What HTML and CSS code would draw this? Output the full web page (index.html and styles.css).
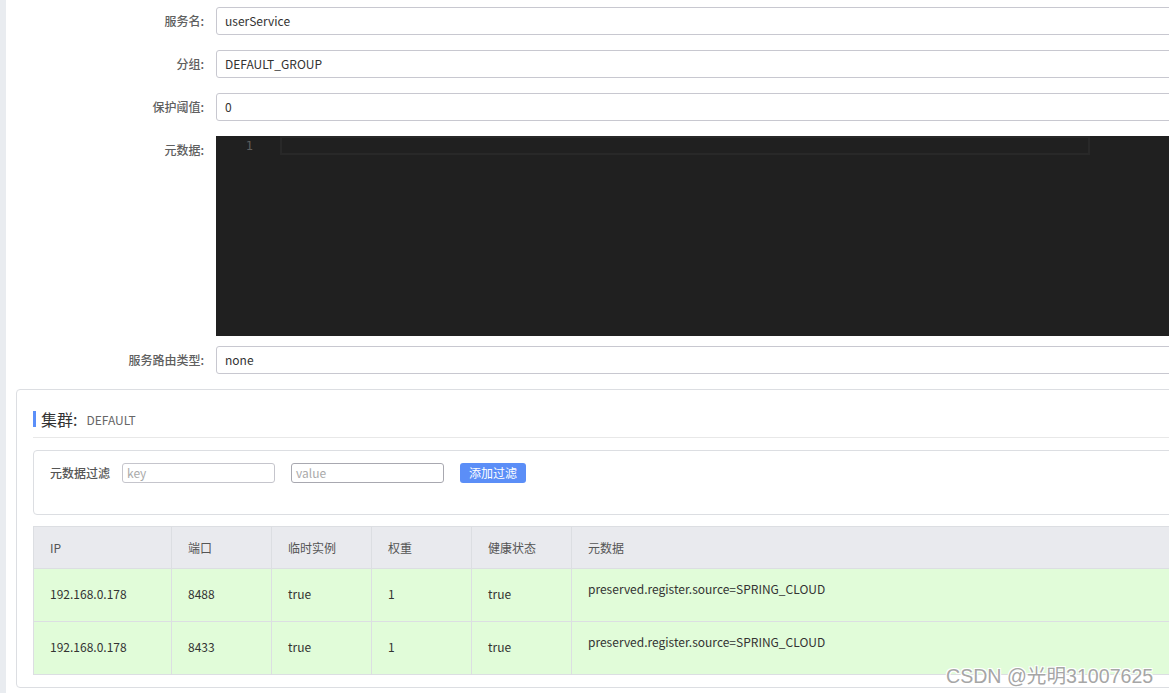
FILE: index.html
```html
<!DOCTYPE html>
<html lang="zh-CN">
<head>
<meta charset="utf-8">
<title>服务详情</title>
<link rel="stylesheet" href="styles.css">
</head>
<body>
<div class="page">
  <div class="sidebar"></div>
  <div class="main">
    <div class="form">
      <div class="row">
        <label class="label">服务名:</label>
        <div class="input">userService</div>
      </div>
      <div class="row">
        <label class="label">分组:</label>
        <div class="input">DEFAULT_GROUP</div>
      </div>
      <div class="row">
        <label class="label">保护阈值:</label>
        <div class="input">0</div>
      </div>
      <div class="row row-editor">
        <label class="label">元数据:</label>
        <div class="editor">
          <div class="gutter">1</div>
          <div class="lines"><div class="active-line"></div></div>
        </div>
      </div>
      <div class="row row-last">
        <label class="label">服务路由类型:</label>
        <div class="input">none</div>
      </div>
    </div>

    <div class="card">
      <div class="card-title"><span class="bar"></span><span class="title-main">集群:</span><span class="title-sub">DEFAULT</span></div>
      <div class="divider"></div>
      <div class="filter">
        <span class="filter-label">元数据过滤</span>
        <div class="small-input key">key</div>
        <div class="small-input value">value</div>
        <button class="btn">添加过滤</button>
      </div>
      <div class="table">
        <div class="tr th">
          <div class="c c1">IP</div>
          <div class="c c2">端口</div>
          <div class="c c3">临时实例</div>
          <div class="c c4">权重</div>
          <div class="c c5">健康状态</div>
          <div class="c c6">元数据</div>
        </div>
        <div class="tr td">
          <div class="c c1">192.168.0.178</div>
          <div class="c c2">8488</div>
          <div class="c c3">true</div>
          <div class="c c4">1</div>
          <div class="c c5">true</div>
          <div class="c c6 meta">preserved.register.source=SPRING_CLOUD</div>
        </div>
        <div class="tr td">
          <div class="c c1">192.168.0.178</div>
          <div class="c c2">8433</div>
          <div class="c c3">true</div>
          <div class="c c4">1</div>
          <div class="c c5">true</div>
          <div class="c c6 meta">preserved.register.source=SPRING_CLOUD</div>
        </div>
      </div>
    </div>
  </div>
</div>
<div class="watermark">CSDN @光明31007625</div>
</body>
</html>
```
FILE: styles.css
```css
html, body {
  margin: 0;
  padding: 0;
  width: 1169px;
  height: 693px;
  overflow: hidden;
  background: #fff;
  font-family: "Noto Sans CJK SC", "Noto Sans", sans-serif;
  font-size: 12px;
  color: #333;
}
.page {
  display: flex;
  width: 1169px;
  height: 693px;
  overflow: hidden;
}
.sidebar {
  width: 6px;
  flex: none;
  background: #e9ecf0;
}
.main {
  flex: none;
  width: 1400px;
  padding-top: 7px;
}
.form {
  display: flex;
  flex-direction: column;
}
.row {
  display: flex;
  align-items: flex-start;
  margin-bottom: 15px;
}
.row-editor { margin-bottom: 10px; }
.row-last { margin-bottom: 15px; }
.label {
  width: 198px;
  flex: none;
  text-align: right;
  padding-right: 12px;
  line-height: 28px;
  color: #606060;
  font-weight: 500;
}
.input {
  flex: 1;
  height: 26px;
  line-height: 26px;
  border: 1px solid #c8c8d0;
  border-radius: 3px;
  padding: 0 8px;
  color: #333;
}
.editor {
  flex: 1;
  height: 200px;
  background: #202020;
  display: flex;
}
.gutter {
  width: 37px;
  padding-right: 27px;
  text-align: right;
  font-family: "DejaVu Sans Mono", monospace;
  font-size: 12px;
  line-height: 20px;
  color: #5e5e5e;
  flex: none;
}
.lines { flex: 1; }
.active-line {
  width: 806px;
  height: 15px;
  border: 2px solid #282828;
}
.card {
  margin-left: 10px;
  border: 1px solid #dcdee2;
  border-radius: 4px;
  padding: 19px 16px 12px 16px;
}
.card-title {
  display: flex;
  align-items: center;
  height: 20px;
}
.bar {
  width: 3px;
  height: 16px;
  background: #5b8ff9;
  margin-right: 5px;
}
.title-main {
  font-size: 16px;
  color: #333;
}
.title-sub {
  font-size: 12px;
  color: #666;
  margin-left: 9px;
}
.divider {
  height: 1px;
  background: #e8e8e8;
  margin-top: 8px;
  margin-bottom: 12px;
}
.filter {
  display: flex;
  border: 1px solid #dcdee2;
  border-radius: 4px;
  padding: 12px 16px 0 16px;
  align-items: flex-start;
  box-sizing: border-box;
  height: 65px;
}
.filter-label {
  line-height: 20px;
  color: #555;
  font-weight: 500;
  margin-right: 12px;
}
.small-input {
  width: 143px;
  height: 18px;
  line-height: 18px;
  border: 1px solid #c5c5cc;
  border-radius: 3px;
  padding: 0 4px;
  color: #aaa;
  margin-right: 16px;
}
.small-input.value { border-color: #a8a8b0; }
.btn {
  font-family: inherit;
  font-size: 12px;
  width: 66px;
  height: 20px;
  line-height: 18px;
  padding: 0;
  border: none;
  border-radius: 3px;
  background: #5b8ef7;
  color: #fff;
}
.table {
  margin-top: 11px;
  border-left: 1px solid #dcdee2;
  border-top: 1px solid #dcdee2;
}
.tr {
  display: flex;
}
.c {
  box-sizing: border-box;
  border-right: 1px solid #dcdee2;
  border-bottom: 1px solid #dcdee2;
  padding-left: 16px;
  display: flex;
  align-items: center;
  flex: none;
}
.th .c {
  height: 42px;
  background: #e9eaee;
  color: #555;
}
.td .c {
  height: 53px;
  background: #e1fcd9;
  color: #333;
  padding-bottom: 3px;
}
.td .c.meta {
  align-items: flex-start;
  padding-top: 11px;
  padding-bottom: 0;
}
.c1 { width: 138px; }
.c2 { width: 100px; }
.c3 { width: 100px; }
.c4 { width: 100px; }
.c5 { width: 100px; }
.c6 { width: 700px; }
.watermark {
  position: absolute;
  left: 946px;
  top: 660px;
  font-family: "Liberation Sans", "Noto Sans CJK SC", sans-serif;
  font-size: 19.6px;
  color: #a6a6a6;
  text-shadow: 1px 1px 0 #fff, -1px -1px 0 #fff, 1px -1px 0 #fff, -1px 1px 0 #fff;
  white-space: nowrap;
}
```
